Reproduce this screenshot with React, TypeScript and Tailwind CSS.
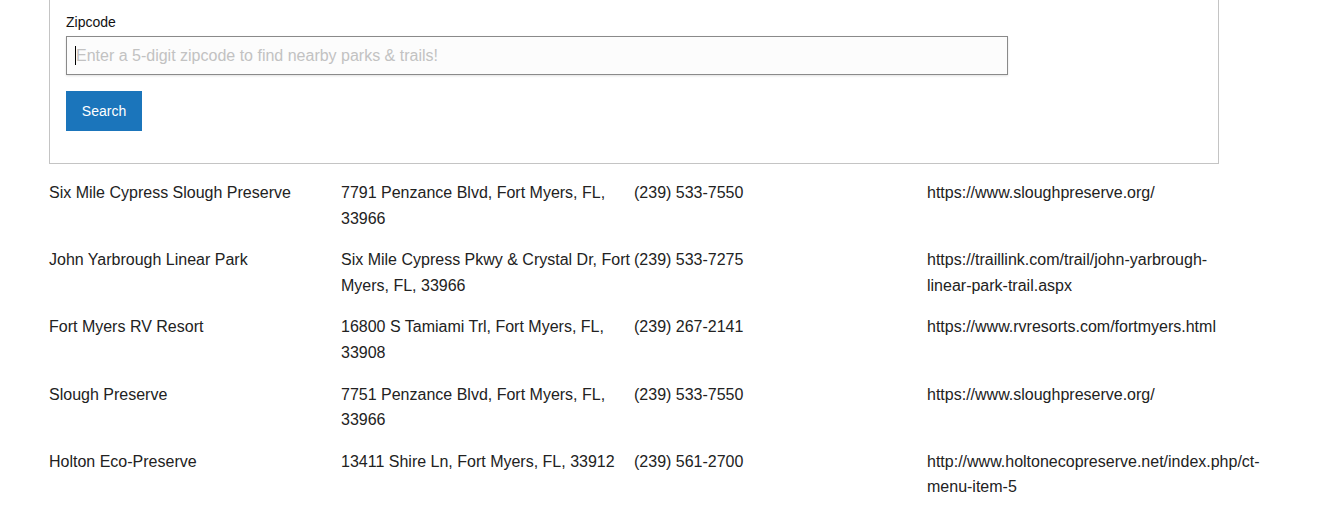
import React from "react";

const rows = [
  ["Six Mile Cypress Slough Preserve", "7791 Penzance Blvd, Fort Myers, FL, 33966", "(239) 533-7550", "https://www.sloughpreserve.org/"],
  ["John Yarbrough Linear Park", "Six Mile Cypress Pkwy & Crystal Dr, Fort Myers, FL, 33966", "(239) 533-7275", "https://traillink.com/trail/john-yarbrough-linear-park-trail.aspx"],
  ["Fort Myers RV Resort", "16800 S Tamiami Trl, Fort Myers, FL, 33908", "(239) 267-2141", "https://www.rvresorts.com/fortmyers.html"],
  ["Slough Preserve", "7751 Penzance Blvd, Fort Myers, FL, 33966", "(239) 533-7550", "https://www.sloughpreserve.org/"],
  ["Holton Eco-Preserve", "13411 Shire Ln, Fort Myers, FL, 33912", "(239) 561-2700", "http://www.holtonecopreserve.net/index.php/ct-menu-item-5"],
];

export default function App() {
  return (
    <div className="min-h-[520px] bg-white text-[#222] font-['Liberation_Sans',Arial,sans-serif]">
      <div className="ml-[49px] w-[1170px]">
        <div className="border-x border-b border-[#c4c4c4] px-[16px] pt-[13px] pb-[32px]">
          <label className="block text-[14px] leading-[18px] text-[#111] mb-[5px]">Zipcode</label>
          <div className="relative w-[942px]">
            <input
              className="block w-full h-[39px] border border-[#8a8a8a] bg-[#fcfcfc] px-[9px] text-[16px] outline-none shadow-[0_1px_2px_rgba(0,0,0,0.12)] placeholder:text-[#c2c2c2]"
              placeholder="Enter a 5-digit zipcode to find nearby parks & trails!"
            />
            <span className="absolute left-[9px] top-[10px] h-[19px] w-px bg-black" />
          </div>
          <button className="mt-[16px] h-[40px] w-[76px] bg-[#1b75bb] text-white text-[14px]">Search</button>
        </div>
        <div className="pt-[16px]">
          {rows.map((r, i) => (
            <div key={i} className="grid grid-cols-[292px_293px_293px_292px] text-[16px] leading-[25.6px] mb-[16px]">
              {r.map((c, j) => (
                <div key={j} className={j === 1 ? "pr-[3px]" : ""}>{c}</div>
              ))}
            </div>
          ))}
        </div>
      </div>
    </div>
  );
}
